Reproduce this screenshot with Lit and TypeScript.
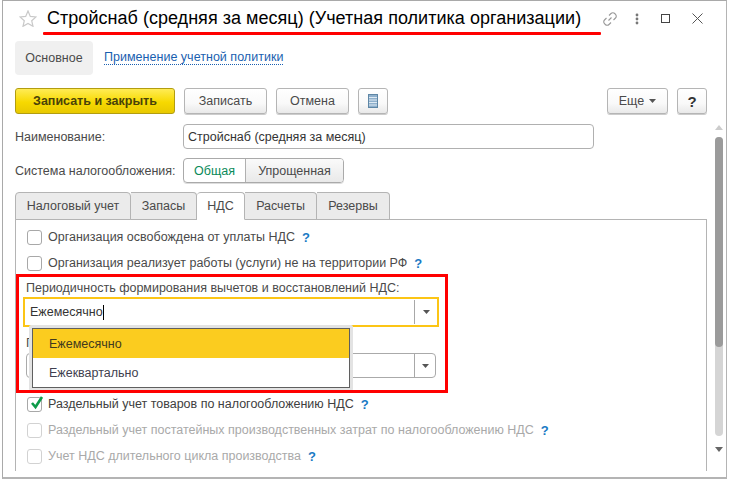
import { LitElement, html, css, svg } from "lit";
import { customElement } from "lit/decorators.js";

const arrow = svg`<svg class="arr" width="7" height="4" viewBox="0 0 7 4"><path d="M0 0h7L3.5 4z" fill="#555"/></svg>`;

@customElement("app-root")
export class AppRoot extends LitElement {
  static styles = css`
    :host { display: block; width: 731px; height: 482px; position: relative; overflow: hidden; background: #fff;
      font-family: "Liberation Sans", Arial, sans-serif; font-size: 12.5px; color: #4a4a4a; }
    * { box-sizing: border-box; }
    .win { margin-left: 2px; width: 725px; height: 479px; border: 1px solid #a9a9a9; border-top-width: 1px; border-top-color: #a9a9a9;
      border-bottom-width: 2px; border-bottom-color: #b4b4b4; border-right-color: #b4b4b4; display: flex; flex-direction: column; background: #fff; }
    .titlebar { height: 40px; display: flex; align-items: center; padding: 0 0 5px 16px; }
    .star { width: 18px; height: 17px; margin-right: 10px; }
    .title { font-size: 18px; color: #000; white-space: nowrap; width: 555px; letter-spacing: .03px; }
    .tbicons { display: flex; align-items: center; }
    .sections { height: 34px; display: flex; align-items: center; padding-left: 12px; }
    .sec { width: 78px; height: 34px; background: #f0f0f0; border-radius: 4px; display: flex; align-items: center; justify-content: center; }
    .seclink { margin-left: 11px; color: #1a5fb0; border-bottom: 1px dotted #1a5fb0; line-height: 13px; letter-spacing: .02px; }
    .toolbar { height: 26px; margin-top: 13px; display: flex; padding-left: 12px; }
    .btn { height: 26px; border: 1px solid #b5b5b5; border-radius: 3px; margin-right: 9px; display: flex; align-items: center; justify-content: center;
      background: linear-gradient(#fff, #f9f9f9 60%, #e9e9e9); box-shadow: 0 1px 0 #ccc; }
    .primary { width: 160px; border-color: #b29d10; font-weight: bold; color: #494209; background: linear-gradient(#ffec55, #f7d900 55%, #e8c900); box-shadow: none; }
    .b1 { width: 83px; } .b2 { width: 73px; } .b3 { width: 30px; }
    .grow { flex: 1; }
    .more { width: 61px; gap: 5px; } .help { width: 30px; margin-right: 19px; font-weight: bold; font-size: 15px; color: #333; }
    .body { flex: 1; display: flex; min-height: 0; }
    .content { width: 711px; padding-left: 12px; }
    .row { display: flex; align-items: center; }
    .lbl { width: 168px; white-space: nowrap; }
    .name { height: 25px; margin-top: 10px; }
    .input { width: 411px; height: 25px; border: 1px solid #b0b0b0; border-radius: 4px; padding-left: 4px; display: flex; align-items: center; color: #333; }
    .tax { height: 25px; margin-top: 9px; }
    .toggle { display: flex; width: 161px; height: 25px; border: 1px solid #aaa; border-radius: 4px; overflow: hidden; box-shadow: 0 1px 0 #ddd; }
    .t1 { width: 62px; color: #0a8a5a; display: flex; align-items: center; justify-content: center; border-right: 1px solid #b0b0b0; }
    .t2 { flex: 1; background: linear-gradient(#fafafa, #e9e9e9); display: flex; align-items: center; justify-content: center; }
    .tabs { display: flex; height: 28px; margin-top: 9px; position: relative; z-index: 1; }
    .tab { height: 28px; border: 1px solid #b4b4b4; border-left-width: 0; border-radius: 0 4px 0 0; background: #ebebeb; display: flex; align-items: center; justify-content: center; }
    .tab:first-child { border-left-width: 1px; border-radius: 4px 4px 0 0; }
    .tab.on { background: #fff; border-bottom-color: #fff; border-radius: 4px 4px 0 0; }
    .panel { width: 692px; height: 252px; margin-top: -1px; border: 1px solid #b4b4b4; border-bottom: 0; padding: 9px 0 0 11px; position: relative; }
    .chk { height: 16px; margin-bottom: 10px; display: flex; align-items: center; white-space: nowrap; }
    .box { width: 15px; height: 15px; border: 1px solid #a8a8a8; border-radius: 3px; margin-right: 6px; flex: none; position: relative; background: #fff; }
    .q { color: #1a7ac4; font-weight: bold; font-size: 13px; margin-left: 7px; }
    .dis { color: #a9a9a9; } .dis .box { border-color: #d2d2d2; }
    .dark { color: #404040; }
    .tick { position: absolute; left: 1px; top: -3px; }
    .plabel { margin: 9px 0 0 -1px; height: 14px; line-height: 14px; white-space: nowrap; }
    .combo { width: 416px; height: 30px; margin: 2px 0 0 -4px; border: 2px solid #fcc515; display: flex; align-items: center; color: #333; }
    .combo .txt { width: 389px; padding-left: 5px; display: flex; align-items: center; height: 100%; }
    .caret { width: 1px; height: 15px; background: #000; }
    .combo .side, .sel .side { flex: 1; height: 24px; border-left: 1px solid #a8a8a8; display: flex; align-items: center; justify-content: center; }
    .cutlabel { margin: 9px 0 0 -1px; height: 14px; line-height: 14px; }
    .sel { width: 410px; height: 25px; margin: 3px 0 0 -1px; border: 1px solid #aaa; border-radius: 4px; display: flex; }
    .sel .txt { width: 387px; }
    .after { margin-top: 18px; }
    .side { padding-top: 0; }
    .popup { position: absolute; left: 29px; top: 325px; width: 324px; height: 66px; border: 3px solid #e3e3e3; border-radius: 2px; }
    .popin { height: 60px; border: 1px solid #5f5f5f; background: #fff; }
    .opt { height: 29px; padding-left: 16px; display: flex; align-items: center; color: #413a1e; }
    .opt.on { background: #fbcc1f; }
    .opt + .opt { color: #3f3f4f; }
    .redbox { position: absolute; left: 16px; top: 274px; width: 432px; height: 119px; border: 3px solid #f00; pointer-events: none; }
    .redline { position: absolute; left: 43px; top: 32px; width: 558px; height: 2.5px; background: #f00; border-radius: 1px; }
    .sb { width: 8px; margin-left: 1px; position: relative; }
    .sb .track { position: absolute; top: 23px; left: 0; width: 8px; height: 299px; background: #d5d5d5; border-radius: 4px; }
    .sb .thumb { position: absolute; top: 23px; left: 0; width: 8px; height: 210px; background: #9b9b9b; border-radius: 4px; }
    .sb .up { position: absolute; left: 0; top: 11px; }
    .sb .dn { position: absolute; left: 0; top: 333px; }
  `;

  chk(text: string, q: boolean, cls = "", checked = false) {
    return html`<div class="chk ${cls}">
      <span class="box">${checked ? html`<svg class="tick" width="15" height="16" viewBox="0 0 15 16"><path d="M3 8l3.5 4L13 2" fill="none" stroke="#0d9b4a" stroke-width="2.6"/></svg>` : ""}</span>
      <span>${text}</span>${q ? html`<span class="q">?</span>` : ""}
    </div>`;
  }

  render() {
    return html`
      <div class="win">
        <div class="titlebar">
          <svg class="star" viewBox="0 0 18 17"><path d="M9 1l2.3 5.4 5.7.5-4.3 3.8 1.3 5.6L9 13.4 4 16.3l1.3-5.6L1 6.9l5.7-.5z" fill="#fff" stroke="#c9c9c9" stroke-width="1.2"/></svg>
          <span class="title">Стройснаб (средняя за месяц) (Учетная политика организации)</span>
          <div class="tbicons">
            <svg width="16" height="16" viewBox="0 0 16 16" fill="none" stroke="#999" stroke-width="1.1"><path d="M6.5 9.5l3-3M7 4.5l2-2a2.6 2.6 0 0 1 3.7 0l.8.8a2.6 2.6 0 0 1 0 3.7l-2 2M9 11.5l-2 2a2.6 2.6 0 0 1-3.7 0l-.8-.8a2.6 2.6 0 0 1 0-3.7l2-2"/></svg>
            <svg style="margin-left:17px" width="4" height="12" viewBox="0 0 4 12" fill="#777"><circle cx="2" cy="2" r="1.4"/><circle cx="2" cy="6" r="1.4"/><circle cx="2" cy="10" r="1.4"/></svg>
            <svg style="margin-left:22px" width="9" height="9" viewBox="0 0 9 9" fill="none" stroke="#444"><rect x=".5" y=".5" width="8" height="8"/></svg>
            <svg style="margin-left:22px" width="11" height="11" viewBox="0 0 11 11" fill="none" stroke="#555"><path d="M.5.5l10 10M10.5.5l-10 10"/></svg>
          </div>
        </div>
        <div class="sections">
          <div class="sec">Основное</div>
          <span class="seclink">Применение учетной политики</span>
        </div>
        <div class="toolbar">
          <div class="btn primary">Записать и закрыть</div>
          <div class="btn b1">Записать</div>
          <div class="btn b2">Отмена</div>
          <div class="btn b3"><svg width="10" height="14" viewBox="0 0 10 14"><rect x=".5" y=".5" width="9" height="13" fill="#8fb0cc" stroke="#5f87a6"/><path d="M1 3.5h8M1 6h8M1 8.5h8M1 11h8" stroke="#dfeaf3"/></svg></div>
          <div class="grow"></div>
          <div class="btn more">Еще ${arrow}</div>
          <div class="btn help">?</div>
        </div>
        <div class="body">
          <div class="content">
            <div class="row name"><span class="lbl">Наименование:</span><div class="input">Стройснаб (средняя за месяц)</div></div>
            <div class="row tax"><span class="lbl">Система налогообложения:</span>
              <div class="toggle"><div class="t1">Общая</div><div class="t2">Упрощенная</div></div></div>
            <div class="tabs">
              <div class="tab" style="width:116px">Налоговый учет</div>
              <div class="tab" style="width:66px">Запасы</div>
              <div class="tab on" style="width:48px">НДС</div>
              <div class="tab" style="width:72px">Расчеты</div>
              <div class="tab" style="width:73px">Резервы</div>
            </div>
            <div class="panel">
              ${this.chk("Организация освобождена от уплаты НДС", true)}
              ${this.chk("Организация реализует работы (услуги) не на территории РФ", true)}
              <div class="plabel">Периодичность формирования вычетов и восстановлений НДС:</div>
              <div class="combo"><div class="txt">Ежемесячно<span class="caret"></span></div><div class="side">${arrow}</div></div>
              <div class="cutlabel">П</div>
              <div class="sel"><div class="txt"></div><div class="side">${arrow}</div></div>
              <div class="after"></div>
              ${this.chk("Раздельный учет товаров по налогообложению НДС", true, "dark", true)}
              ${this.chk("Раздельный учет постатейных производственных затрат по налогообложению НДС", true, "dis")}
              ${this.chk("Учет НДС длительного цикла производства", true, "dis")}
            </div>
          </div>
          <div class="sb">
            <svg class="up" width="8" height="5" viewBox="0 0 8 5"><path d="M4 0l4 5H0z" fill="#ccc"/></svg>
            <div class="track"></div><div class="thumb"></div>
            <svg class="dn" width="8" height="5" viewBox="0 0 8 5"><path d="M0 0h8L4 5z" fill="#666"/></svg>
          </div>
        </div>
      </div>
      <div class="popup"><div class="popin"><div class="opt on">Ежемесячно</div><div class="opt">Ежеквартально</div></div></div>
      <div class="redbox"></div>
      <div class="redline"></div>
    `;
  }
}
